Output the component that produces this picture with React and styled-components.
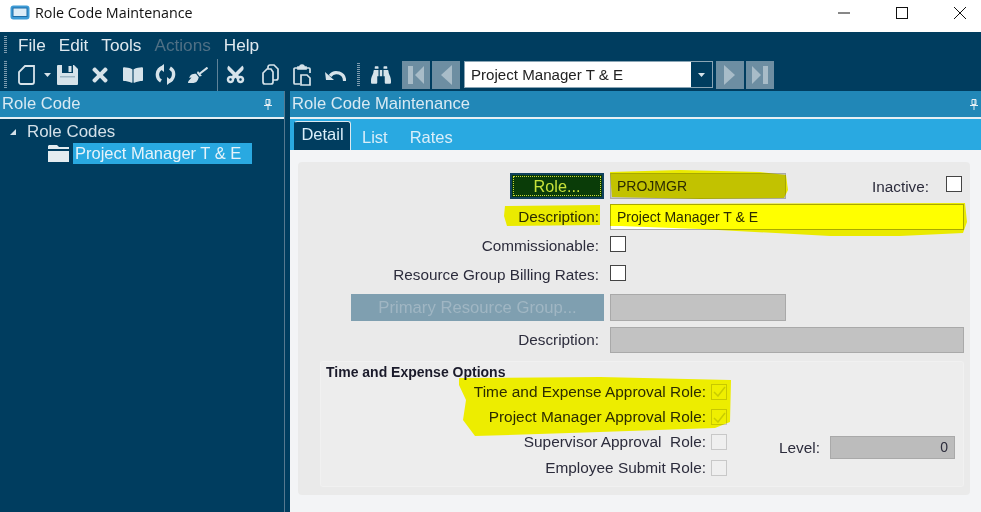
import React from 'react';
import styled, { createGlobalStyle } from 'styled-components';
import { FaBinoculars, FaBookOpen, FaBroom, FaCut, FaTimes } from 'react-icons/fa';

const GlobalStyle = createGlobalStyle`
  html, body { margin: 0; padding: 0; background: #003d5f; }
  body { width: 981px; height: 512px; overflow: hidden; font-family: "Liberation Sans", Arial, sans-serif; }
`;

const DocIcon = () => (
  <svg width="18" height="20" viewBox="0 0 18 20" fill="none" stroke="#d6e3ea" strokeWidth="1.8">
    <path d="M7 1h9v16a2 2 0 0 1-2 2H3a2 2 0 0 1-2-2V7z" />
  </svg>
);
const Caret = () => (
  <svg width="7" height="4" viewBox="0 0 7 4"><path d="M0 0h7L3.5 4z" fill="#d6e3ea" /></svg>
);
const SaveIcon = () => (
  <svg width="21" height="20" viewBox="0 0 21 20">
    <path d="M0 1a1 1 0 0 1 1-1h16l4 4v15a1 1 0 0 1-1 1H1a1 1 0 0 1-1-1z" fill="#d6e3ea" />
    <path d="M5 0h11v8H5z" fill="#003d5f" />
    <path d="M11.5 1h3v6h-3z" fill="#d6e3ea" />
    <path d="M3 11h15v1.500H3z" fill="#9db6c4" />
  </svg>
);
const SyncIcon = () => (
  <svg width="21" height="21" viewBox="0 0 21 21" fill="none" stroke="#d6e3ea" strokeWidth="3.4">
    <path d="M8 3.5A7.4 7.4 0 0 0 6 17" />
    <path d="M13 17.5A7.4 7.4 0 0 0 15 4" />
    <path d="M9 0v8l-5-4zM12 21v-8l5 4z" fill="#d6e3ea" stroke="none" />
  </svg>
);
const CopyIcon = () => (
  <svg width="17" height="21" viewBox="0 0 17 21" fill="none" stroke="#d6e3ea" strokeWidth="1.7">
    <path d="M6 5V3a2 2 0 0 1 2-2h4l4 4v9a2 2 0 0 1-2 2h-3" />
    <path d="M5 5h4l2 3v10a2 2 0 0 1-2 2H3a2 2 0 0 1-2-2V9z" />
  </svg>
);
const PasteIcon = () => (
  <svg width="18" height="22" viewBox="0 0 18 22" fill="none" stroke="#d6e3ea" strokeWidth="1.7">
    <path d="M5 4H2a1 1 0 0 0-1 1v14a1 1 0 0 0 1 1h5M13 4h3a1 1 0 0 1 1 1v4" />
    <path d="M5 5V3h2a2 2 0 0 1 4 0h2v2z" fill="#d6e3ea" />
    <path d="M8 11h6l3 3v7H8z" />
  </svg>
);
const UndoIcon = () => (
  <svg width="21" height="14" viewBox="0 0 21 14" fill="none">
    <path d="M5 8a8 8 0 0 1 14.5 5" stroke="#d6e3ea" strokeWidth="3.2" />
    <path d="M0 4l9 8H1z" fill="#d6e3ea" />
  </svg>
);
const NavIcon = ({ dir, bar }) => (
  <svg width="16" height="20" viewBox="0 0 16 20" fill="#a8bcc8">
    {dir === 'left' ? <path d={bar ? 'M7 10l9-9v18z' : 'M3 10l11-10v20z'} /> : <path d={bar ? 'M9 10L0 1v18z' : 'M13 10L2 0v20z'} />}
    {bar && <rect x={dir === 'left' ? 0 : 11} y="1" width="5" height="18" />}
  </svg>
);
const FolderIcon = () => (
  <svg width="21" height="17" viewBox="0 0 21 17" fill="#e4ecf0">
    <path d="M1 0h8l2 2h10v2H0V1z" />
    <path d="M0 6h21v11H0z" />
  </svg>
);
const AppIcon = () => (
  <svg width="20" height="15" viewBox="0 0 20 15">
    <rect x="0.5" y="0.5" width="19" height="14" rx="3" fill="#3d9bd6" />
    <rect x="3" y="3" width="14" height="8.5" fill="#dcecf7" stroke="#1c6da8" />
  </svg>
);
const Pin = () => (
  <svg width="8" height="11" viewBox="0 0 8 11" fill="none" stroke="#e6eff4" strokeWidth="1">
    <path d="M2 .5h4v5H2z" />
    <path d="M5 1v4.500" />
    <path d="M0 6.500h8M4 7v4" />
  </svg>
);
const Check = () => (
  <svg width="13" height="11" viewBox="0 0 13 11" fill="none" stroke="#c9cc3c" strokeWidth="1.5">
    <path d="M1 6l4 4 7-9" />
  </svg>
);
const CtrlIcon = ({ d }) => (
  <svg width="12" height="12" viewBox="0 0 12 12" fill="none" stroke="#111" strokeWidth="1"><path d={d} /></svg>
);

const Page = styled.div`
  position: relative;
  width: 981px;
  height: 512px;
  display: flex;
  flex-direction: column;
  background: #003d5f;
  overflow: hidden;
`;
const TitleBar = styled.div`
  height: 32px;
  background: #fff;
  display: flex;
  align-items: center;
  padding: 0 15px 7px 10px;
  box-sizing: border-box;
`;
const TitleText = styled.span`
  font-family: "Open Sans", "Noto Sans", sans-serif;
  font-size: 14.3px;
  color: #111;
  margin-left: 5px;
  flex: 1;
`;
const WindowBtns = styled.div`
  display: flex;
  align-items: center;
  gap: 46px;
`;
const Maximize = styled.i`
  width: 10px;
  height: 10px;
  border: 1px solid #111;
  display: block;
`;
const MenuBar = styled.div`
  height: 26px;
  display: flex;
  align-items: center;
  padding-left: 18px;
  gap: 13px;
  font-size: 17.2px;
`;
const MenuItem = styled.span`
  color: ${(p) => (p.$off ? '#4f7085' : '#dfe9ef')};
`;
const Grip = styled.i`
  display: block;
  width: 3px;
  height: ${(p) => p.$h}px;
  background: repeating-linear-gradient(to bottom, #7f9db0 0 1px, transparent 1px 2px);
  margin-left: ${(p) => p.$ml || 0}px;
`;
const MenuGrip = styled(Grip)`
  margin-left: -14px;
  margin-right: -2px;
`;
const ToolBar = styled.div`
  height: 33px;
  display: flex;
  align-items: center;
  padding-left: 4px;
`;
const Slot = styled.span`
  display: flex;
  align-items: center;
  justify-content: center;
  width: ${(p) => p.$w}px;
  margin-left: ${(p) => p.$ml}px;
  color: #d6e3ea;
  font-size: ${(p) => p.$size || 20}px;
  transform: rotate(${(p) => p.$rot || 0}deg);
`;
const Divider = styled.i`
  display: block;
  width: 1px;
  height: 32px;
  background: #5f8399;
  margin-left: 9px;
`;
const NavBtn = styled.span`
  display: flex;
  align-items: center;
  justify-content: center;
  width: 28px;
  height: 28px;
  background: #6d8ea2;
  margin-left: ${(p) => p.$ml}px;
`;
const Combo = styled.div`
  width: 249px;
  height: 27px;
  margin-left: 4px;
  box-sizing: border-box;
  display: flex;
  background: #fff;
  border: 1px solid #8aa5b5;
`;
const ComboText = styled.span`
  flex: 1;
  font-size: 15.1px;
  line-height: 25px;
  padding-left: 6px;
  color: #222;
`;
const ComboDrop = styled.span`
  width: 21px;
  background: #003d5f;
  display: flex;
  align-items: center;
  justify-content: center;
`;
const Panes = styled.div`
  flex: 1;
  display: flex;
  min-height: 0;
`;
const LeftPane = styled.section`
  width: 285px;
  box-sizing: border-box;
  border-right: 1px solid #55788f;
  margin-right: 5px;
`;
const RightPane = styled.section`
  flex: 1;
  display: flex;
  flex-direction: column;
`;
const PaneHeader = styled.header`
  height: 28px;
  box-sizing: border-box;
  background: #2187b7;
  border-bottom: 2px solid #e6eff4;
  display: flex;
  align-items: center;
  justify-content: space-between;
  padding: 0 12px 0 2px;
  font-size: 16.6px;
  color: #d9eaf3;
`;
const RightHeader = styled(PaneHeader)`
  padding: 0 3px 0 2px;
`;
const Tree = styled.div`
  padding: 2px 0 0 10px;
  font-size: 16.5px;
  color: #d3e0e8;
`;
const TreeRoot = styled.div`
  display: flex;
  align-items: center;
  height: 21px;
  gap: 11px;
  font-size: 16.9px;
`;
const Arrow = styled.i`
  width: 0;
  height: 0;
  border-left: 6px solid transparent;
  border-bottom: 6px solid #d3e0e8;
`;
const TreeLeaf = styled.div`
  display: flex;
  align-items: center;
  height: 22px;
  margin-left: 38px;
  gap: 4px;
`;
const Selected = styled.span`
  width: 179px;
  box-sizing: border-box;
  padding-left: 2px;
  line-height: 21px;
  background: #29a9e1;
  color: #e6f3fa;
`;
const TabStrip = styled.nav`
  height: 31px;
  background: #29a9e1;
  display: flex;
  align-items: flex-end;
  padding-left: 4px;
  box-sizing: border-box;
  font-size: 16.5px;
  color: #d9eef9;
`;
const Tab = styled.span`
  height: ${(p) => (p.$active ? 29 : 26)}px;
  box-sizing: border-box;
  line-height: ${(p) => (p.$active ? 25 : 27)}px;
  margin-left: ${(p) => p.$ml || 0}px;
  ${(p) => p.$active && `
    width: 57px;
    text-align: center;
    background: #003d5f;
    border: 1px solid #dce9f0;
    border-bottom: none;
    border-left-color: #003d5f;
    border-radius: 3px 3px 0 0;
  `}
`;
const Content = styled.div`
  flex: 1;
  background: #f3f4f6;
  padding: 12px 11px 0 8px;
`;
const Panel = styled.div`
  height: 333px;
  box-sizing: border-box;
  background: #eaeaea;
  border-radius: 4px;
  padding-top: 11px;
`;
const Row = styled.div`
  display: flex;
  align-items: center;
  height: ${(p) => p.$h}px;
  margin-top: ${(p) => p.$mt || 0}px;
`;
const LabelCell = styled.div`
  width: 306px;
  flex: none;
  display: flex;
  justify-content: flex-end;
`;
const Label = styled.span`
  padding: ${(p) => p.$pt || 0}px 5px 0 0;
  font-size: 15.3px;
  color: #2c2c3c;
`;
const Field = styled.div`
  width: ${(p) => p.$w}px;
  height: 100%;
  margin-left: 6px;
  box-sizing: border-box;
  border: 1px solid #a9a9a9;
  background: ${(p) => (p.$disabled ? '#c2c2c2' : '#fff')};
  font-size: 14px;
  line-height: 25px;
  padding-left: 6px;
  color: #2c2c2c;
`;
const Box = styled.span`
  display: flex;
  align-items: center;
  justify-content: center;
  flex: none;
  width: 16px;
  height: 16px;
  box-sizing: border-box;
  border: 1px solid ${(p) => (p.$faint ? '#c8c8c8' : '#444')};
  background: ${(p) => (p.$faint ? '#efefef' : '#fff')};
  margin-left: ${(p) => p.$ml || 0}px;
  margin-bottom: ${(p) => p.$mb || 0}px;
`;
const RoleButton = styled.span`
  width: 94px;
  height: 26px;
  box-sizing: border-box;
  border: 2px solid #10405c;
  background: #0a3c08;
  outline: 1px dotted #c9d838;
  outline-offset: -4px;
  color: #c6e23a;
  font-size: 16.2px;
  line-height: 22px;
  text-align: center;
`;
const DisabledButton = styled.span`
  width: 253px;
  height: 27px;
  background: #7f9fb0;
  color: #a0b6c3;
  font-size: 16.7px;
  line-height: 27px;
  text-align: center;
`;
const InactiveLabel = styled.span`
  margin-left: 86px;
  padding-top: 2px;
  font-size: 15.3px;
  color: #2c2c3c;
`;
const Group = styled.fieldset`
  margin: 8px 6px 0 22px;
  padding: 0;
  height: 126px;
  border-radius: 3px;
  background: #ededed;
  border: 1px solid #f1f1f1;
  box-sizing: border-box;
`;
const GroupTitle = styled.div`
  font-size: 14px;
  font-weight: bold;
  color: #1a1a2a;
  padding: 2px 0 0 5px;
  line-height: 16px;
`;
const GroupBody = styled.div`
  display: flex;
`;
const CheckList = styled.div`
  width: 406px;
  margin-top: -1px;
`;
const CheckRow = styled.div`
  height: 25.4px;
  display: flex;
  align-items: center;
  justify-content: flex-end;
  gap: 5px;
  font-size: 15.4px;
  color: #2c2c3c;
`;
const LevelRow = styled.div`
  display: flex;
  align-items: center;
  height: 23px;
  margin: 56px 0 0 52px;
  font-size: 15.4px;
  color: #2c2c3c;
`;
const LevelField = styled.div`
  width: 125px;
  height: 100%;
  margin-left: 10px;
  box-sizing: border-box;
  background: #bcbcbc;
  border: 1px solid #a9a9a9;
  text-align: right;
  padding-right: 6px;
  font-size: 14px;
  line-height: 21px;
`;
const Marker = styled.svg`
  position: absolute;
  inset: 0;
  pointer-events: none;
  mix-blend-mode: multiply;
`;

export default function App() {
  return (
    <Page>
      <GlobalStyle />
      <TitleBar>
        <AppIcon />
        <TitleText>Role Code Maintenance</TitleText>
        <WindowBtns>
          <CtrlIcon d="M0 6h12" />
          <Maximize />
          <CtrlIcon d="M0 0l12 12M12 0L0 12" />
        </WindowBtns>
      </TitleBar>
      <MenuBar>
        <MenuGrip $h={18} />
        <MenuItem>File</MenuItem>
        <MenuItem>Edit</MenuItem>
        <MenuItem>Tools</MenuItem>
        <MenuItem $off>Actions</MenuItem>
        <MenuItem>Help</MenuItem>
      </MenuBar>
      <ToolBar>
        <Grip $h={27} />
        <Slot $w={18} $ml={11}><DocIcon /></Slot>
        <Slot $w={7} $ml={8}><Caret /></Slot>
        <Slot $w={21} $ml={6}><SaveIcon /></Slot>
        <Slot $w={18} $ml={13} $size={22}><FaTimes /></Slot>
        <Slot $w={21} $ml={13}><FaBookOpen /></Slot>
        <Slot $w={21} $ml={12}><SyncIcon /></Slot>
        <Slot $w={21} $ml={11}><FaBroom /></Slot>
        <Divider />
        <Slot $w={21} $ml={7} $rot={-90}><FaCut /></Slot>
        <Slot $w={17} $ml={16}><CopyIcon /></Slot>
        <Slot $w={18} $ml={14}><PasteIcon /></Slot>
        <Slot $w={21} $ml={14}><UndoIcon /></Slot>
        <Grip $h={24} $ml={11} />
        <Slot $w={20} $ml={11}><FaBinoculars /></Slot>
        <NavBtn $ml={11}><NavIcon dir="left" bar /></NavBtn>
        <NavBtn $ml={2}><NavIcon dir="left" /></NavBtn>
        <Combo>
          <ComboText>Project Manager T &amp; E</ComboText>
          <ComboDrop><Caret /></ComboDrop>
        </Combo>
        <NavBtn $ml={3}><NavIcon dir="right" /></NavBtn>
        <NavBtn $ml={2}><NavIcon dir="right" bar /></NavBtn>
      </ToolBar>
      <Panes>
        <LeftPane>
          <PaneHeader>Role Code<Pin /></PaneHeader>
          <Tree>
            <TreeRoot><Arrow />Role Codes</TreeRoot>
            <TreeLeaf><FolderIcon /><Selected>Project Manager T &amp; E</Selected></TreeLeaf>
          </Tree>
        </LeftPane>
        <RightPane>
          <RightHeader>Role Code Maintenance<Pin /></RightHeader>
          <TabStrip>
            <Tab $active>Detail</Tab>
            <Tab $ml={11}>List</Tab>
            <Tab $ml={22}>Rates</Tab>
          </TabStrip>
          <Content>
            <Panel>
              <Row $h={26}>
                <LabelCell><RoleButton>Role...</RoleButton></LabelCell>
                <Field $w={176} $disabled>PROJMGR</Field>
                <InactiveLabel>Inactive:</InactiveLabel>
                <Box $ml={17} $mb={4} />
              </Row>
              <Row $h={26} $mt={5}>
                <LabelCell><Label>Description:</Label></LabelCell>
                <Field $w={354}>Project Manager T &amp; E</Field>
              </Row>
              <Row $h={16} $mt={6}>
                <LabelCell><Label $pt={4}>Commissionable:</Label></LabelCell>
                <Box $ml={6} />
              </Row>
              <Row $h={16} $mt={13}>
                <LabelCell><Label $pt={3}>Resource Group Billing Rates:</Label></LabelCell>
                <Box $ml={6} />
              </Row>
              <Row $h={27} $mt={13}>
                <LabelCell><DisabledButton>Primary Resource Group...</DisabledButton></LabelCell>
                <Field $w={176} $disabled />
              </Row>
              <Row $h={26} $mt={6}>
                <LabelCell><Label>Description:</Label></LabelCell>
                <Field $w={354} $disabled />
              </Row>
              <Group>
                <GroupTitle>Time and Expense Options</GroupTitle>
                <GroupBody>
                  <CheckList>
                    <CheckRow>Time and Expense Approval Role:<Box $faint><Check /></Box></CheckRow>
                    <CheckRow>Project Manager Approval Role:<Box $faint><Check /></Box></CheckRow>
                    <CheckRow>Supervisor Approval&nbsp; Role:<Box $faint /></CheckRow>
                    <CheckRow>Employee Submit Role:<Box $faint /></CheckRow>
                  </CheckList>
                  <LevelRow>Level:<LevelField>0</LevelField></LevelRow>
                </GroupBody>
              </Group>
            </Panel>
          </Content>
        </RightPane>
      </Panes>
      <Marker width="981" height="512" viewBox="0 0 981 512">
        <g fill="#ffff00">
          <path d="M610 172L680 170L760 172L786 175L788 190L784 198L700 199L612 197z" />
          <path d="M505 206L600 205L600 225L507 226L504 216z" />
          <path d="M610 204L965 203L967 222L963 233L900 236L830 236L700 229L620 226L610 226z" />
          <path d="M459 378L600 377L731 380L730 422L715 428L600 432L475 436L463 420L466 400L459 385z" />
        </g>
      </Marker>
    </Page>
  );
}
